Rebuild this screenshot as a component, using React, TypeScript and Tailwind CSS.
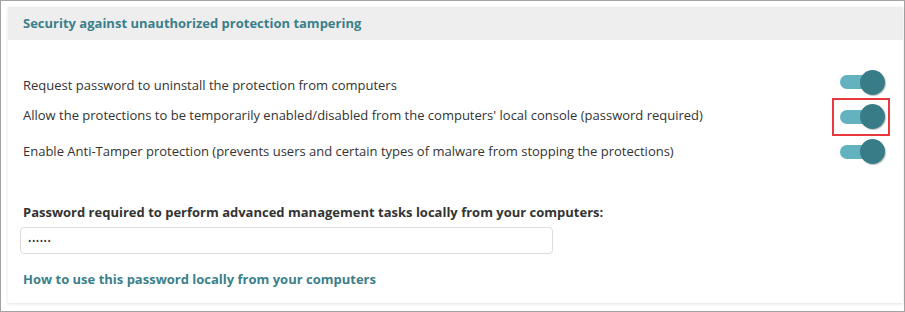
import React from "react";

function Toggle({ boxed }: { boxed?: boolean }) {
  return (
    <div className="relative w-[52px] h-[28px] flex items-center">
      <div className="absolute left-[4px] w-[32px] h-[14px] rounded-full bg-[#62b3bf]" />
      <div className="absolute left-[24px] w-[25px] h-[25px] rounded-full bg-[#377c87] shadow-[1px_1px_1px_rgba(0,0,0,0.25)]" />
      {boxed && (
        <div className="absolute left-[-4px] top-[-5px] w-[58px] h-[38px] border-2 border-[#e8383d]" />
      )}
    </div>
  );
}

export default function App() {
  const font = { fontFamily: '"Open Sans", "Noto Sans", sans-serif' };
  return (
    <div
      className="w-[905px] h-[312px] border border-[#a3a3a3] bg-white pl-[7px] pt-[6px] pr-[1px] text-[13px] text-[#333333]"
      style={font}
    >
      <div className="bg-white shadow-[0_1px_3px_rgba(0,0,0,0.12)]">
        <div className="h-[33px] bg-[#eeeeee] flex items-center px-[15px] font-bold text-[#3b7f8b]">
          Security against unauthorized protection tampering
        </div>
        <div className="pt-[25px] pl-[15px] pr-[15px] pb-[15px]">
          <div className="h-[34px] flex items-center justify-between">
            <span className="mt-[8px]">Request password to uninstall the protection from computers</span>
            <Toggle />
          </div>
          <div className="h-[35px] flex items-center justify-between">
            <span className="mt-[-2px]">
              Allow the protections to be temporarily enabled/disabled from the computers' local console (password required)
            </span>
            <Toggle boxed />
          </div>
          <div className="h-[35px] flex items-center justify-between">
            <span>
              Enable Anti-Tamper protection (prevents users and certain types of malware from stopping the protections)
            </span>
            <Toggle />
          </div>
          <div className="mt-[34px] font-bold leading-[18px]">
            Password required to perform advanced management tasks locally from your computers:
          </div>
          <div className="mt-[6px] ml-[-3px] w-[533px] h-[27px] border border-[#dddddd] rounded-[4px] flex items-center px-[7px] text-[9px] tracking-[0.5px] text-[#333]">
            ••••••
          </div>
          <div className="mt-[16px] font-bold leading-[18px] text-[#3b7f8b]">
            How to use this password locally from your computers
          </div>
        </div>
      </div>
    </div>
  );
}
